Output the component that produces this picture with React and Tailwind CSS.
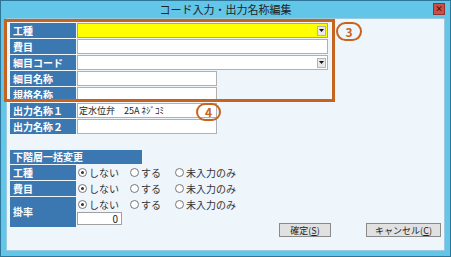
import React from "react";

const font = { fontFamily: '"Noto Sans CJK JP", "Noto Sans", sans-serif' };

function Label({ children, h = "h-[15px]", w = "w-[66px]" }) {
  return (
    <div className={`${w} ${h} bg-[#3b78b2] text-white font-bold text-[10px] leading-none flex items-center pl-[3px] shrink-0`}>
      {children}
    </div>
  );
}

function Arrow() {
  return (
    <div className="w-[9px] h-[10px] bg-[#e8e8e8] border border-[#b5b5b5] flex items-center justify-center mr-[1px]">
      <svg width="5" height="3" viewBox="0 0 5 3"><path d="M0 0H5L2.5 3Z" fill="#111" /></svg>
    </div>
  );
}

function Row({ label, children }) {
  return (
    <div className="flex h-[15px] mb-[1px] gap-[1px]">
      <Label>{label}</Label>
      {children}
    </div>
  );
}

function Radio({ checked, text, w }) {
  return (
    <div className={`${w} flex items-center gap-[2px] text-[10px] text-[#333] leading-none`}>
      <span className="w-[9px] h-[9px] rounded-full border border-[#777] bg-white flex items-center justify-center">
        {checked && <span className="w-[3px] h-[3px] rounded-full bg-[#333]" />}
      </span>
      <span>{text}</span>
    </div>
  );
}

function Radios() {
  return (
    <div className="flex items-center pl-[1px] h-[15px]">
      <Radio checked text="しない" w="w-[52px]" />
      <Radio text="する" w="w-[45px]" />
      <Radio text="未入力のみ" w="w-[70px]" />
    </div>
  );
}

export default function App() {
  return (
    <div style={font} className="relative w-[451px] h-[257px] bg-[#62c6e8] border border-[#2d7699] flex flex-col">
      <div className="h-[17px] relative flex items-center justify-center text-[11px] text-[#222] leading-none">
        コード入力・出力名称編集
        <div className="absolute left-[432px] top-[2px] w-[12px] h-[12px] bg-[#c9504a] border border-[#8d3431] flex items-center justify-center text-[8px] font-bold text-[#3a1010] leading-none">
          ×
        </div>
      </div>
      <div className="flex-1 mx-[5px] mb-[5px] bg-[#eef5fb] border border-[#9cc9de] pl-[3px] pt-[4px] pr-[2px] flex flex-col">
        <Row label="工種">
          <div className="w-[251px] h-[15px] bg-[#ffff00] border border-[#a8a88a] flex items-center justify-end">
            <Arrow />
          </div>
        </Row>
        <Row label="費目">
          <div className="w-[251px] h-[15px] bg-white border border-[#b0b0b0]" />
        </Row>
        <Row label="細目コード">
          <div className="w-[251px] h-[15px] bg-white border border-[#b0b0b0] flex items-center justify-end">
            <Arrow />
          </div>
        </Row>
        <Row label="細目名称">
          <div className="w-[140px] h-[15px] bg-white border border-[#b0b0b0]" />
        </Row>
        <Row label="規格名称">
          <div className="w-[140px] h-[15px] bg-white border border-[#b0b0b0]" />
        </Row>
        <Row label="出力名称１">
          <div className="w-[140px] h-[15px] bg-white border border-[#b0b0b0] text-[9px] text-[#222] leading-none flex items-center pl-[1px] whitespace-pre">
            定水位弁　25A ﾈｼﾞｺﾐ
          </div>
        </Row>
        <Row label="出力名称２">
          <div className="w-[140px] h-[15px] bg-white border border-[#b0b0b0]" />
        </Row>

        <div className="flex items-end justify-between mt-[15px]">
          <div className="flex flex-col pb-[10px]">
            <div className="w-[132px] h-[14px] bg-[#3b78b2] text-white font-bold text-[10px] leading-none flex items-center pl-[3px] mb-[1px]">
              下階層一括変更
            </div>
            <div className="flex h-[15px] mb-[1px] gap-[1px]">
              <Label>工種</Label>
              <Radios />
            </div>
            <div className="flex h-[15px] mb-[1px] gap-[1px]">
              <Label>費目</Label>
              <Radios />
            </div>
            <div className="flex h-[30px] gap-[1px]">
              <Label h="h-[30px]">掛率</Label>
              <div className="flex flex-col">
                <Radios />
                <div className="w-[45px] h-[13px] bg-white border border-[#a0a0a0] text-[10px] text-[#222] leading-none flex items-center justify-end pr-[3px]">
                  0
                </div>
              </div>
            </div>
          </div>
          <div className="flex gap-[35px] pb-0 pr-[1px]">
            <div className="w-[52px] h-[14px] bg-[#e1e1e1] border border-[#8a8a8a] text-[9px] text-[#222] leading-none flex items-center justify-center">
              確定(<span className="underline">S</span>)
            </div>
            <div className="w-[75px] h-[14px] bg-[#e1e1e1] border border-[#8a8a8a] text-[9px] text-[#222] leading-none flex items-center justify-center">
              キャンセル(<span className="underline">C</span>)
            </div>
          </div>
        </div>
      </div>

      <div className="absolute left-[3px] top-[18px] w-[331px] h-[83px] border-[3px] border-[#c5631f]" />
      <div className="absolute left-[335px] top-[21px] w-[26px] h-[19px] rounded-full border-2 border-[#c5631f] flex items-center justify-center text-[12px] font-bold text-[#c5631f] leading-none">
        3
      </div>
      <div className="absolute left-[195px] top-[102px] w-[25px] h-[18px] rounded-full border-2 border-[#c5631f] flex items-center justify-center text-[12px] font-bold text-[#c5631f] leading-none">
        4
      </div>
    </div>
  );
}
